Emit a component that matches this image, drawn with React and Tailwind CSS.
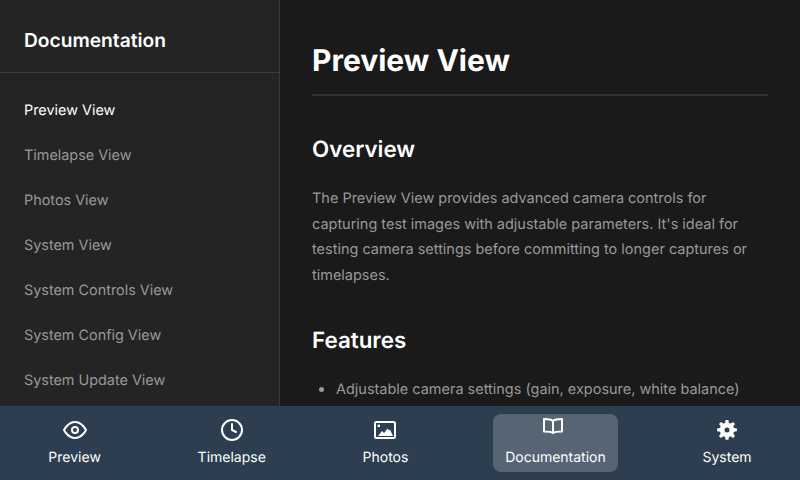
import React from 'react';
import { FiEye, FiClock } from 'react-icons/fi';

const docs = [
    'Preview View',
    'Timelapse View',
    'Photos View',
    'System View',
    'System Controls View',
    'System Config View',
    'System Update View',
];

function PhotoIcon() {
    return (
        <svg width="24" height="24" viewBox="0 0 24 24" fill="none">
            <rect x="2" y="4" width="20" height="16" rx="1.5" stroke="currentColor" strokeWidth="2" />
            <rect x="4.6" y="6.6" width="2.4" height="2.4" fill="currentColor" />
            <path d="M5 18l4-5 2 2 3.5-4.5 1.5 2 1-1 3 6.5z" fill="currentColor" />
        </svg>
    );
}

function BookIcon() {
    return (
        <svg width="24" height="16" viewBox="2 0 24 16" fill="none" stroke="currentColor" strokeWidth="2">
            <path d="M12 3C10.5 1.6 8 1 3 1v12.5c5 0 7.5.3 9 1.5 1.5-1.2 4-1.5 9-1.5V1c-5 0-7.5.6-9 2z" strokeLinejoin="round" />
            <path d="M12 3v12" />
        </svg>
    );
}

function GearIcon() {
    return (
        <svg width="24" height="24" viewBox="0 0 24 24" fill="currentColor">
            <path
                fillRule="evenodd"
                d="M10.6 2h2.8l.5 2.9 1.7.7 2.4-1.7 2 2-1.7 2.4.7 1.7 2.9.5v2.8l-2.9.5-.7 1.7 1.7 2.4-2 2-2.4-1.7-1.7.7-.5 2.9h-2.8l-.5-2.9-1.7-.7-2.4 1.7-2-2 1.7-2.4-.7-1.7-2.9-.5v-2.8l2.9-.5.7-1.7-1.7-2.4 2-2 2.4 1.7 1.7-.7zM12 9.5a2.5 2.5 0 100 5 2.5 2.5 0 000-5z"
            />
        </svg>
    );
}

const tabs = [
    { label: 'Preview', icon: <FiEye size={24} /> },
    { label: 'Timelapse', icon: <FiClock size={24} /> },
    { label: 'Photos', icon: <PhotoIcon /> },
    { label: 'Documentation', icon: <BookIcon />, active: true },
    { label: 'System', icon: <GearIcon /> },
];

export default function App() {
    return (
        <div className="flex flex-col w-[800px] h-[480px] overflow-hidden bg-[#1a1a1a] font-['Inter',sans-serif] [text-rendering:geometricPrecision] antialiased">
            <div className="flex flex-1 min-h-0">
                <aside className="w-[280px] shrink-0 bg-[#242424] border-r border-[#3a3a3a] overflow-hidden">
                    <div className="h-[73px] px-6 pt-7 border-b border-[#3a3a3a]">
                        <h2 className="text-[19.2px] leading-6 font-semibold text-white">Documentation</h2>
                    </div>
                    <ul className="pt-[15px]">
                        {docs.map((d, i) => (
                            <li key={d} className={`h-[45px] px-6 flex items-center text-[14.4px] ${i === 0 ? 'text-white' : 'text-[#999999]'}`}>{d}</li>
                        ))}
                    </ul>
                </aside>
                <main className="flex-1 overflow-hidden px-8 pt-9">
                    <h1 className="text-[30px] leading-[50px] font-bold text-white pb-2 border-b-2 border-[#333333]">Preview View</h1>
                    <h2 className="mt-9 text-[22.4px] leading-9 font-semibold text-white">Overview</h2>
                    <p className="mt-[18px] text-[14.48px] leading-[25.6px] text-[#999999]">
                        The Preview View provides advanced camera controls for capturing test images with adjustable parameters. It's ideal for testing camera settings before committing to longer captures or timelapses.
                    </p>
                    <h2 className="mt-[35px] text-[22.4px] leading-9 font-semibold text-white">Features</h2>
                    <ul className="mt-[17px] pl-6 list-disc text-[14.48px] leading-[25.6px] text-[#999999] marker:text-[18px]">
                        <li>Adjustable camera settings (gain, exposure, white balance)</li>
                    </ul>
                </main>
            </div>
            <nav className="h-[74px] shrink-0 bg-[#2c3e50] flex items-center justify-around">
                {tabs.map(({ label, icon, active }) => (
                    <div key={label} className={`flex flex-col items-center h-[58px] px-3 pt-1 rounded-lg text-sm text-white ${active ? 'bg-white/20' : ''}`}>
                        <div className={`flex justify-center h-6 ${active ? 'items-start' : 'items-center'}`}>{icon}</div>
                        <span className="mt-1.5 leading-5">{label}</span>
                    </div>
                ))}
            </nav>
        </div>
    );
}
